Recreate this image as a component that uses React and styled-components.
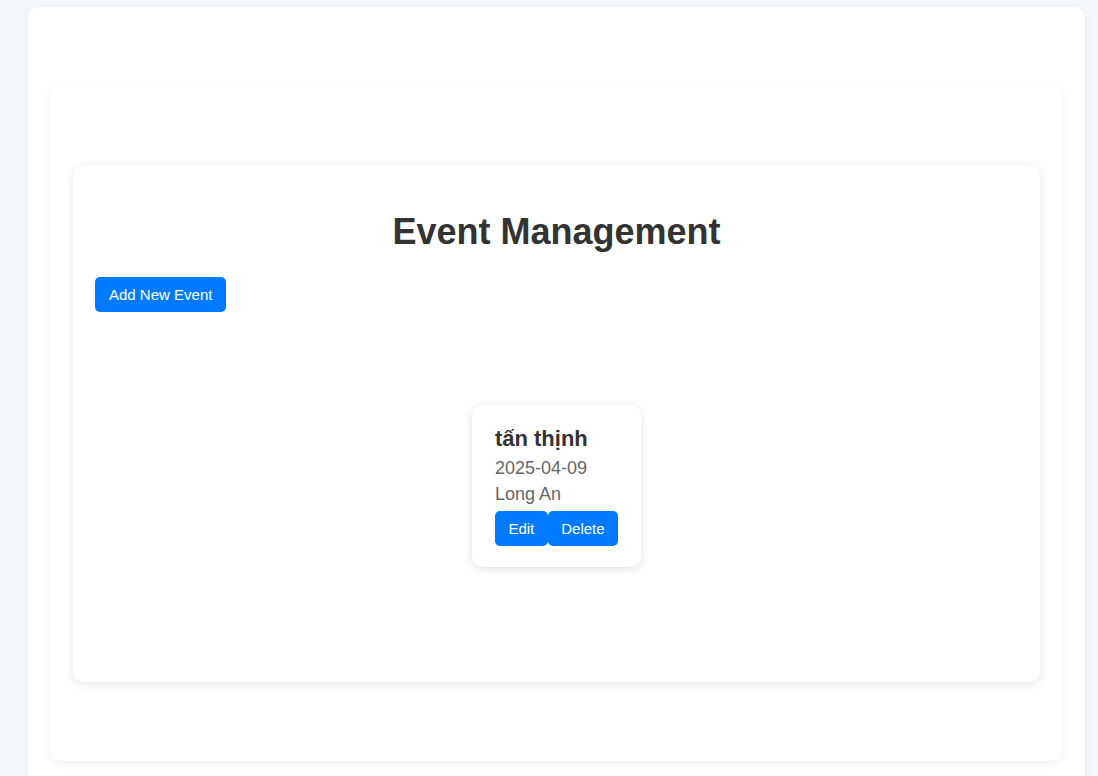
import React from 'react'
import styled, { createGlobalStyle } from 'styled-components'

const blue = '#007bff'
const ink = '#333'
const muted = '#666'

const GlobalStyle = createGlobalStyle`
	html, body {
		margin: 0;
		background: #f3f6fb;
		font-family: 'Liberation Sans', Arial, sans-serif;
	}
`

const Page = styled.div`
	padding: 7px 13px 0 28px;
`

const Card = styled.div`
	background: #fff;
	border-radius: 10px;
	box-shadow: 0 2px 10px rgba(0, 0, 0, ${p => p.$shade || 0.06});
	padding: ${p => p.$pad || '79px 23px 79px 22px'};
`

const Title = styled.h1`
	margin: 24px 0;
	text-align: center;
	font-size: 36px;
	font-weight: bold;
	color: ${ink};
`

const Button = styled.button`
	height: 35px;
	padding: 0 ${p => p.$px || 14}px;
	border: none;
	border-radius: 5px;
	background: ${blue};
	color: #fff;
	font-family: inherit;
	font-size: 15px;
	cursor: pointer;
`

const EventList = styled.div`
	display: flex;
	justify-content: center;
	flex-wrap: wrap;
	gap: 20px;
	margin: 93px 0 93px;
`

const EventCard = styled.div`
	background: #fff;
	border-radius: 10px;
	box-shadow: 0 2px 10px rgba(0, 0, 0, 0.12);
	padding: 21px 23px 21px;
`

const EventName = styled.h3`
	margin: 0 0 6px;
	font-size: 22px;
	font-weight: bold;
	color: ${ink};
`

const Meta = styled.p`
	margin: 0 0 5px;
	font-size: 18px;
	color: ${muted};
`

const Actions = styled.div`
	display: flex;
	margin-top: 6px;
`

const events = [{ id: 1, name: 'tấn thịnh', date: '2025-04-09', location: 'Long An' }]

export default function App() {
	return (
		<>
			<GlobalStyle />
			<Page>
				<Card>
					<Card $pad='79px 22px 79px 23px'>
						<Card $pad='22px' $shade={0.1}>
							<Title>Event Management</Title>
							<Button>Add New Event</Button>
							<EventList>
								{events.map(ev => (
									<EventCard key={ev.id}>
										<EventName>{ev.name}</EventName>
										<Meta>{ev.date}</Meta>
										<Meta>{ev.location}</Meta>
										<Actions>
											<Button $px={13.5}>Edit</Button>
											<Button $px={13.5}>Delete</Button>
										</Actions>
									</EventCard>
								))}
							</EventList>
						</Card>
					</Card>
				</Card>
			</Page>
		</>
	)
}
